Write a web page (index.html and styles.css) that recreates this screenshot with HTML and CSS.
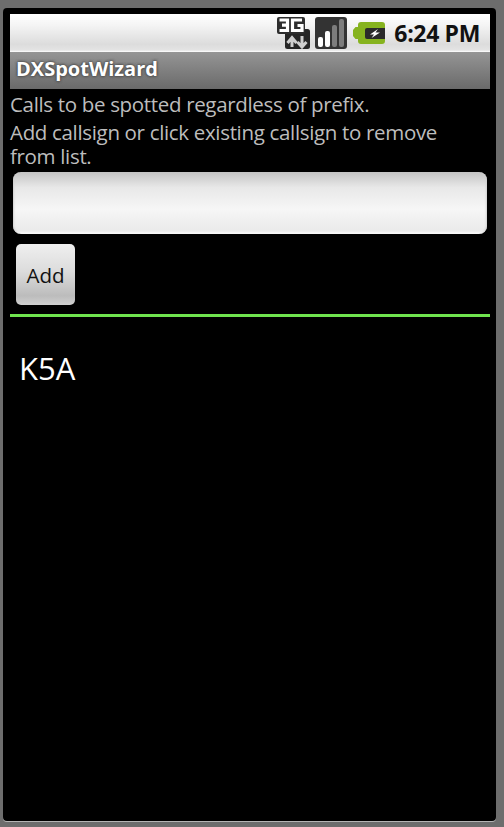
FILE: index.html
```html
<!DOCTYPE html>
<html lang="en">
<head>
<meta charset="utf-8">
<title>DXSpotWizard</title>
<link rel="stylesheet" href="styles.css">
</head>
<body>
<div class="device">
  <div class="screen">
    <header class="status">
      <svg class="icon icon-net" width="33" height="32" viewBox="0 0 33 32">
        <rect x="8" y="12" width="25" height="20" rx="2.500" fill="#262626"/>
        <rect x="0" y="0" width="28" height="17" rx="2" fill="#2e2e2e"/>
        <path d="M2.500 3h8v10.500h-8M5 8.200h5.500M25 3h-9.500v10.500H25V8.500h-4.500" fill="none" stroke="#fff" stroke-width="3.200"/>
        <path d="M15 30v-8M10.500 26l4.500-5.500 4.500 5.500M25 19v9M20.500 25l4.500 5 4.500-5" fill="none" stroke="#cfcfcf" stroke-width="3"/>
      </svg>
      <svg class="icon icon-signal" width="32" height="32" viewBox="0 0 32 32">
        <rect x="0" y="0" width="32" height="32" rx="3" fill="#333"/>
        <rect x="3" y="20" width="5" height="10" rx="2" fill="#fff"/>
        <rect x="10" y="14" width="5" height="16" rx="2" fill="#fff"/>
        <rect x="17" y="8" width="5" height="22" rx="2" fill="#7d7d7d"/>
        <rect x="24" y="2" width="5" height="28" rx="2" fill="#7d7d7d"/>
      </svg>
      <svg class="icon icon-battery" width="32" height="24" viewBox="0 0 32 24">
        <path d="M8 1h21a3 3 0 0 1 3 3v16a3 3 0 0 1-3 3H8a3 3 0 0 1-3-3v-2H2.500L0 15V9l2.500-3H5V4a3 3 0 0 1 3-3z" fill="#86b31f"/>
        <path d="M14 7h18v11H14a2 2 0 0 1-2-2V9a2 2 0 0 1 2-2z" fill="#2a2a2a"/>
        <path d="M25 8l-8 5.500h4L18.500 17l8.500-5.500h-4.500z" fill="#fff"/>
      </svg>
      <span class="time">6:24 PM</span>
    </header>
    <div class="titlebar"><span class="title">DXSpotWizard</span></div>
    <main class="content">
      <p class="line">Calls to be spotted regardless of prefix.</p>
      <p class="line second">Add callsign or click existing callsign to remove from list.</p>
      <input class="field" type="text" aria-label="Callsign">
      <button class="add" type="button">Add</button>
      <div class="rule"></div>
      <div class="call">K5A</div>
    </main>
  </div>
</div>
</body>
</html>
```
FILE: styles.css
```css
* { box-sizing: border-box; }
html, body { margin: 0; height: 100%; }
body {
  background: #6d6d6d;
  padding: 8px 8px 5px 3px;
  font-family: "Open Sans", "Noto Sans", sans-serif;
  overflow: hidden;
}
.device {
  height: 813px;
  width: 493px;
  background: #000;
  border-radius: 4px;
  padding: 6px 6px 0 7px;
  box-shadow: 0 1px 0 #b5b5b5;
}
.screen { width: 480px; }
.status {
  height: 38px;
  display: flex;
  align-items: center;
  justify-content: flex-end;
  padding-right: 10px;
  background: linear-gradient(#ffffff 0%, #f4f4f4 30%, #dcdcdc 80%, #e4e4e4 95%, #ffffff 100%);
}
.icon { display: block; }
.icon-net { margin-right: 5px; }
.icon-signal { margin-right: 6px; }
.icon-battery { margin-right: 9px; }
.time {
  font-size: 23px;
  font-weight: 700;
  letter-spacing: -0.35px;
  color: #111;
  line-height: 30px;
  white-space: nowrap;
}
.titlebar {
  height: 37px;
  background: linear-gradient(#959595, #6a6a6a);
  display: flex;
  align-items: center;
  padding: 0 0 3px 6px;
}
.title {
  color: #fff;
  font-size: 20px;
  font-weight: 700;
  line-height: 26px;
  text-shadow: 0 0 3px #444, 0 0 3px #444;
}
.content { display: flex; flex-direction: column; align-items: flex-start; }
.line {
  margin: 0;
  max-width: 470px;
  color: #bdbdbd;
  font-size: 20.500px;
  letter-spacing: -0.33px;
  line-height: 24px;
}
.line:first-child { margin-top: 3px; }
.second { margin-top: 4px; }
.field {
  display: block;
  width: 474px;
  height: 62px;
  margin: 4px 0 0 3px;
  border: 0;
  border-radius: 8px;
  background: linear-gradient(#c4c4c4 0%, #e8e8e8 25%, #f6f6f6 60%, #eaeaea 95%, #fff 100%);
  box-shadow: inset 2px 0 2px -1px #d0d0d0, inset -2px 0 2px -1px #d0d0d0;
}
.add {
  width: 59px;
  height: 61px;
  margin: 10px 0 0 6px;
  border: 0;
  border-radius: 5px;
  padding: 0;
  font: 400 20.500px "Open Sans", "Noto Sans", sans-serif;
  color: #111;
  background: linear-gradient(#efefef 0%, #dcdcdc 45%, #bcbcbc 85%, #d0d0d0 100%);
}
.rule { width: 480px; height: 3px; margin-top: 9px; background: #70e44f; }
.call {
  color: #fff;
  font-size: 31px;
  line-height: 40px;
  margin: 31px 0 0 9px;
}
```
